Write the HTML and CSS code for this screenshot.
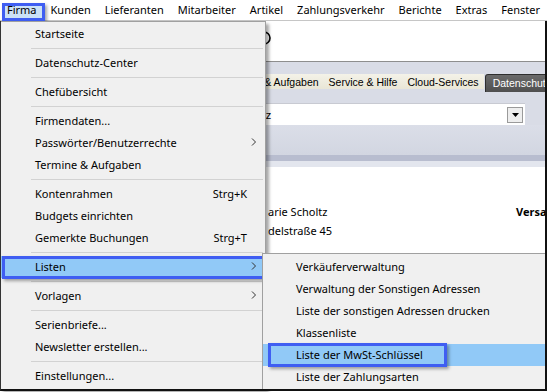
FILE: index.html
```html
<!DOCTYPE html>
<html lang="de">
<head>
<meta charset="utf-8">
<title>Firma Menü</title>
<link rel="stylesheet" href="styles.css">
</head>
<body>
<div class="window">
  <nav class="menubar">
    <span class="mb active">Firma</span>
    <span class="mb">Kunden</span>
    <span class="mb">Lieferanten</span>
    <span class="mb">Mitarbeiter</span>
    <span class="mb">Artikel</span>
    <span class="mb">Zahlungsverkehr</span>
    <span class="mb">Berichte</span>
    <span class="mb">Extras</span>
    <span class="mb">Fenster</span>
  </nav>

  <div class="app">
    <div class="toolbar">
      <svg class="tool-icon" width="16" height="16" viewBox="0 0 16 16"><circle cx="8" cy="8" r="6" fill="none" stroke="#000" stroke-width="1.6"/></svg>
    </div>
    <div class="tb-line"></div>
    <div class="band band-top"></div>
    <div class="tabbar">
      <div class="tabs-plain">
        <span class="tab">Termine &amp; Aufgaben</span>
        <span class="tab">Service &amp; Hilfe</span>
        <span class="tab">Cloud-Services</span>
      </div>
      <span class="tab tab-active">Datenschutz</span>
    </div>
    <div class="band band-mid"></div>
    <div class="combo-row">
      <div class="combo">
        <span class="combo-val">Datenschutz</span>
        <span class="combo-btn"><svg width="7" height="4" viewBox="0 0 7 4"><polygon points="0,0 7,0 3.5,4" fill="#000"/></svg></span>
      </div>
    </div>
    <div class="header-area"></div>
    <div class="stripe-dark"></div>
    <div class="stripe-light"></div>
    <div class="content">
      <div class="row"><span>arie Scholtz</span><b class="versa">Versa</b></div>
      <div class="row"><span>delstraße 45</span></div>
    </div>
  </div>

  <div class="menu menu-main">
    <div class="mi"><span>Startseite</span></div>
    <div class="sep"></div>
    <div class="mi"><span>Datenschutz-Center</span></div>
    <div class="sep"></div>
    <div class="mi"><span>Chefübersicht</span></div>
    <div class="sep"></div>
    <div class="mi"><span>Firmendaten...</span></div>
    <div class="mi"><span>Passwörter/Benutzerrechte</span><svg class="arr" width="6" height="8" viewBox="0 0 6 8"><polyline points="1,0.5 4.5,4 1,7.5" fill="none" stroke="#333" stroke-width="1"/></svg></div>
    <div class="mi"><span>Termine &amp; Aufgaben</span></div>
    <div class="sep"></div>
    <div class="mi"><span>Kontenrahmen</span><span class="sc">Strg+K</span></div>
    <div class="mi"><span>Budgets einrichten</span></div>
    <div class="mi"><span>Gemerkte Buchungen</span><span class="sc">Strg+T</span></div>
    <div class="sep"></div>
    <div class="mi mi-hl mi-mark"><span>Listen</span><svg class="arr" width="6" height="8" viewBox="0 0 6 8"><polyline points="1,0.5 4.5,4 1,7.5" fill="none" stroke="#333" stroke-width="1"/></svg></div>
    <div class="sep"></div>
    <div class="mi"><span>Vorlagen</span><svg class="arr" width="6" height="8" viewBox="0 0 6 8"><polyline points="1,0.5 4.5,4 1,7.5" fill="none" stroke="#333" stroke-width="1"/></svg></div>
    <div class="sep"></div>
    <div class="mi"><span>Serienbriefe...</span></div>
    <div class="mi"><span>Newsletter erstellen...</span></div>
    <div class="sep"></div>
    <div class="mi"><span>Einstellungen...</span></div>
  </div>

  <div class="menu menu-sub">
    <div class="si"><span>Verkäuferverwaltung</span></div>
    <div class="si"><span>Verwaltung der Sonstigen Adressen</span></div>
    <div class="si"><span>Liste der sonstigen Adressen drucken</span></div>
    <div class="si"><span>Klassenliste</span></div>
    <div class="si si-hl"><span>Liste der MwSt-Schlüssel</span></div>
    <div class="si"><span>Liste der Zahlungsarten</span></div>
  </div>

  <div class="frame"></div>
</div>
</body>
</html>
```

FILE: styles.css
```css
* { box-sizing: border-box; }

body {
  margin: 0;
  background: #fff;
}

.window {
  position: relative;
  width: 547px;
  height: 392px;
  overflow: hidden;
  background: #fff;
  font-family: "Noto Sans", "Open Sans", sans-serif;
  font-size: 11px;
  color: #000;
}

/* ---------- menu bar ---------- */
.menubar {
  position: relative;
  z-index: 3;
  display: flex;
  height: 21px;
  border-bottom: 1px solid #c6c6c6;
  background: #fff;
}

.mb {
  position: relative;
  padding: 0 7px;
  line-height: 20px;
  white-space: nowrap;
}

.mb.active::before {
  content: "";
  position: absolute;
  left: 2px;
  right: -1px;
  top: 3px;
  bottom: -1px;
  z-index: -1;
  background: #cbe2f7;
  border: 3px solid #3f5ef2;
  box-shadow: 2px 2px 3px rgba(0, 0, 0, 0.35);
}

/* ---------- application behind the menu ---------- */
.app {
  display: flex;
  flex-direction: column;
  height: 371px;
}

.toolbar {
  position: relative;
  height: 40px;
  background: #fff;
}

.tool-icon {
  position: absolute;
  left: 256px;
  top: 9px;
}

.tb-line {
  height: 1px;
  background: #8e8e8e;
}

.band {
  background: #d9dce6;
}

.band-top { height: 12px; }
.band-mid { height: 11px; }

.tabbar {
  display: flex;
  height: 18px;
  background: #d9dce6;
  font-family: "Liberation Sans", Arial, sans-serif;
  font-size: 10.5px;
}

.tabs-plain {
  display: flex;
  align-self: flex-start;
  height: 15px;
  margin-left: 219px;
  background: linear-gradient(#f4f2e8, #e9e6d6);
}

.tab {
  padding: 1px 5px 0;
  line-height: 15px;
  white-space: nowrap;
}

.tab-active {
  margin-left: 1px;
  padding: 1px 7px 0;
  line-height: 15px;
  height: 18px;
  background: linear-gradient(#6a6a6a, #4f4f4f);
  color: #fff;
  border: 1px solid #2e2e2e;
  border-bottom: 0;
  border-radius: 3px 3px 0 0;
}

.combo-row {
  height: 22px;
  background: #d9dce6;
  padding-right: 22px;
}

.combo {
  display: flex;
  align-items: center;
  justify-content: space-between;
  height: 22px;
  background: #fff;
  border-top: 1px solid #c8cad2;
  font-family: "Liberation Sans", Arial, sans-serif;
  font-size: 11px;
  padding-left: 210px;
  padding-right: 2px;
}

.combo-btn {
  display: flex;
  align-items: center;
  justify-content: center;
  width: 16px;
  height: 16px;
  background: #eeeeee;
  border: 1px solid #9a9a9a;
}

.header-area {
  height: 30px;
  background: linear-gradient(#dbdee8, #d2d6e1);
}

.stripe-dark {
  height: 6px;
  background: #b8bdcf;
}

.stripe-light {
  height: 6px;
  background: #e3e6ee;
}

.content {
  flex: 1;
  background: #fff;
  padding: 35px 0 0 268px;
}

.row {
  display: grid;
  grid-template-columns: 248px auto;
  line-height: 19px;
  white-space: nowrap;
}

.versa {
  font-weight: bold;
}

/* ---------- popup menus ---------- */
.menu {
  position: absolute;
  background: #f0f0f0;
  border: 1px solid #a0a0a0;
}

.menu-main {
  z-index: 5;
  left: 0;
  top: 21px;
  width: 266px;
  padding: 1px 0 2px;
  box-shadow: 3px 3px 3px rgba(0, 0, 0, 0.35);
}

.menu-sub {
  z-index: 6;
  left: 262px;
  top: 253px;
  width: 300px;
  padding: 2px 0;
}

.mi {
  position: relative;
  display: flex;
  align-items: center;
  justify-content: space-between;
  height: 22px;
  padding: 0 8px 2px 34px;
  white-space: nowrap;
}

.sc {
  margin-right: 10px;
}

.arr {
  display: block;
}

.sep {
  height: 7px;
  padding: 3px 2px 0 30px;
}

.sep::before {
  content: "";
  display: block;
  height: 1px;
  background: #d2d2d2;
}

.mi-hl {
  background: #91c9f7;
}

.mi-mark::after {
  content: "";
  position: absolute;
  left: 1px;
  right: -2px;
  top: 0;
  bottom: -1px;
  border: 3px solid #3f5ef2;
  box-shadow: 2px 2px 3px rgba(0, 0, 0, 0.35);
}

.si {
  position: relative;
  display: flex;
  align-items: center;
  height: 22px;
  padding: 0 0 2px 33px;
  white-space: nowrap;
}

.si-hl {
  background: #91c9f7;
}

.si-hl::after {
  content: "";
  position: absolute;
  left: 5px;
  width: 173px;
  top: -1px;
  bottom: -1px;
  border: 3px solid #3f5ef2;
  box-shadow: 2px 2px 3px rgba(0, 0, 0, 0.35);
}

/* ---------- window frame ---------- */
.frame {
  position: absolute;
  z-index: 10;
  left: 0;
  right: 0;
  top: 21px;
  bottom: 1px;
  border-left: 1px solid #333;
  border-right: 2px solid #111;
  border-bottom: 2px solid #111;
  pointer-events: none;
}
```
